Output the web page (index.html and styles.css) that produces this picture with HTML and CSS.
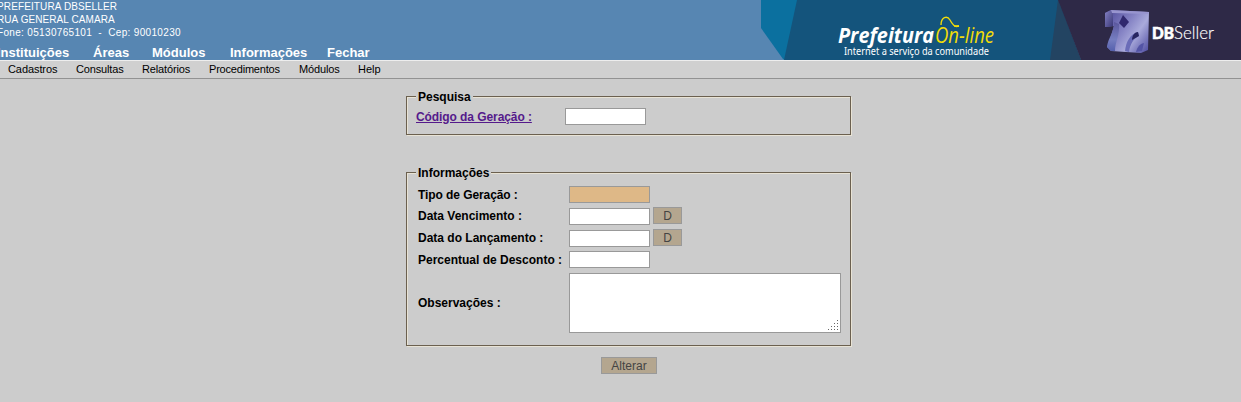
FILE: index.html
```html
<!DOCTYPE html>
<html lang="pt-BR">
<head>
<meta charset="utf-8">
<title>DBSeller</title>
<link rel="stylesheet" href="styles.css">
</head>
<body>
<header class="top">
  <div class="top-left">
    <div class="address">
      <div class="name">PREFEITURA DBSELLER</div>
      <div class="street">RUA GENERAL CAMARA</div>
      <div class="phone">Fone: 05130765101 &nbsp;-&nbsp; Cep: 90010230</div>
    </div>
    <nav class="main-nav">
      <a class="n1">Instituições</a><a class="n2">Áreas</a><a class="n3">Módulos</a><a class="n4">Informações</a><a>Fechar</a>
    </nav>
  </div>
  <svg class="banner" width="480" height="60" viewBox="0 0 480 60">
    <defs>
      <linearGradient id="cube" x1="0" y1="0.2" x2="1" y2="0.9">
        <stop offset="0" stop-color="#55519f"/><stop offset="0.4" stop-color="#8583c4"/><stop offset="0.65" stop-color="#a9aadb"/><stop offset="1" stop-color="#5553a5"/>
      </linearGradient>
      <linearGradient id="side" x1="0" y1="0" x2="1" y2="1">
        <stop offset="0" stop-color="#8582c4"/><stop offset="1" stop-color="#393777"/>
      </linearGradient>
      <linearGradient id="leg" x1="0" y1="0" x2="0" y2="1">
        <stop offset="0" stop-color="#5a569c"/><stop offset="0.6" stop-color="#757dc0"/><stop offset="1" stop-color="#5560ad"/>
      </linearGradient>
    </defs>
    <path d="M0 0H37L24 60L22 59L0 28Z" fill="#0b709f"/>
    <path d="M36 0H298L320 60H23Z" fill="#14547c"/>
    <path d="M297 0L320 60H289Z" fill="#234462"/>
    <path d="M297 0H480V60H320Z" fill="#2e2947"/>
    <g>
      <path d="M344 13L350 10L388 12L387 50L380 53L350 51L346 47L350 36L353 26L344 27Z" fill="url(#cube)"/>
      <path d="M344 13L350 10L352 14L352 26L344 27Z" fill="url(#side)"/>
      <path d="M350 10L388 12L387 14L351 13Z" fill="#9895cf"/>
      <path d="M353 22L358 24C359 35 354 42 354 51L350 51L346 47C347 38 353 33 353 22Z" fill="url(#leg)"/>
      <path d="M362 15L368 22L363 28L358 23Z" fill="#30286e"/>
      <path d="M377 32C369 34 365 42 364 51L368 52C369 44 373 38 378 36Z" fill="#6a6cb8"/>
      <path d="M377 32L378 36L371 40C371 35 374 32 377 32Z" fill="#27255f"/>
      <path d="M383 43C378 44 376 48 375 52L381 51Z" fill="#5354a5"/>
    </g>
    <text class="brand" x="77" y="43" textLength="96" lengthAdjust="spacingAndGlyphs">Prefeitura</text>
    <text class="online" x="174" y="43" textLength="59" lengthAdjust="spacingAndGlyphs">On-line</text>
    <path d="M180 25C180 17 186 15 189 20C193 27 195 27 198 26" fill="none" stroke="#f3dc08" stroke-width="1.4"/>
    <path d="M193 26H198" stroke="#f3dc08" stroke-width="1.6"/>
    <text class="tagline" x="83" y="54.500" textLength="145" lengthAdjust="spacingAndGlyphs">Internet a serviço da comunidade</text>
    <text class="db" x="391" y="39" textLength="22" lengthAdjust="spacingAndGlyphs">DB</text>
    <text class="seller" x="413" y="39" textLength="40" lengthAdjust="spacingAndGlyphs">Seller</text>
  </svg>
</header>
<nav class="menu">
  <a class="m1">Cadastros</a><a class="m2">Consultas</a><a class="m3">Relatórios</a><a class="m4">Procedimentos</a><a class="m5">Módulos</a><a>Help</a>
</nav>
<main class="content">
  <fieldset class="box search">
    <legend>Pesquisa</legend>
    <div class="search-row"><a class="link" href="#">Código da Geração :</a><input class="field" type="text"></div>
  </fieldset>
  <fieldset class="box info">
    <legend>Informações</legend>
    <div class="grid">
      <label class="type">Tipo de Geração :</label><div><input class="field tan" type="text" readonly></div>
      <label class="due">Data Vencimento :</label><div class="date"><input class="field" type="text"><button class="btn d">D</button></div>
      <label class="due">Data do Lançamento :</label><div class="date"><input class="field" type="text"><button class="btn d">D</button></div>
      <label class="discount">Percentual de Desconto :</label><div><input class="field" type="text"></div>
      <label class="notes">Observações :</label>
      <div class="area"><textarea></textarea>
        <svg class="grip" width="10" height="10" viewBox="0 0 10 10" fill="#666"><path d="M9 0h1v1h-1zM6 3h1v1h-1zM9 3h1v1h-1zM3 6h1v1h-1zM6 6h1v1h-1zM9 6h1v1h-1zM0 9h1v1h-1zM3 9h1v1h-1zM6 9h1v1h-1zM9 9h1v1h-1z"/></svg>
      </div>
    </div>
  </fieldset>
  <button class="btn submit">Alterar</button>
</main>
</body>
</html>
```

FILE: styles.css
```css
* { box-sizing: border-box; }
body {
  margin: 0;
  height: 402px;
  overflow: hidden;
  background: #ccc;
  color: #000;
  font-family: "Liberation Sans", Arial, sans-serif;
  font-size: 12px;
}
.top {
  display: flex;
  justify-content: space-between;
  height: 60px;
  background: #5786b2;
  color: #fff;
  overflow: hidden;
}
.top-left { margin-left: -3px; white-space: nowrap; }
.address { font-size: 10px; line-height: 13px; height: 45px; }
.name { letter-spacing: 0.12px; }
.street { letter-spacing: 0.08px; }
.phone { letter-spacing: 0.33px; }
.main-nav { display: flex; font-size: 13px; font-weight: bold; line-height: 15px; }
.n1 { width: 96px; }
.n2 { width: 59px; }
.n3 { width: 78px; }
.n4 { width: 97px; }
.banner { flex: none; display: block; }
.banner text { font-family: "Open Sans", sans-serif; fill: #fff; }
.banner .brand { font-size: 21px; font-weight: 700; font-style: italic; }
.banner .online { font-size: 21px; font-style: italic; fill: #f3dc08; }
.banner .tagline { font-family: "Noto Sans", sans-serif; font-size: 10px; }
.banner .db { font-family: Lato, sans-serif; font-weight: 900; font-size: 16px; stroke: #fff; stroke-width: 0.6px; }
.banner .seller { font-family: Lato, sans-serif; font-weight: 300; font-size: 17px; stroke: #fff; stroke-width: 0.15px; }
.menu {
  display: flex;
  height: 19px;
  padding-left: 8px;
  border-top: 1px solid #eee;
  border-bottom: 1px solid #929292;
  background: #d0d0d0;
  font-size: 11px;
  line-height: 17px;
}
.m1 { width: 68px; letter-spacing: -0.08px; }
.m2 { width: 66px; letter-spacing: -0.15px; }
.m3 { width: 67px; letter-spacing: -0.15px; }
.m4 { width: 90px; letter-spacing: -0.2px; }
.m5 { width: 59px; letter-spacing: -0.15px; }
.content {
  display: flex;
  flex-direction: column;
  align-items: center;
  padding: 11px 0 0 16px;
}
.box {
  width: 445px;
  margin: 0;
  padding: 0 9px;
  border: 1px solid #6b604f;
  box-shadow: 1px 1px 0 #e8e3d5, inset 1px 1px 0 #e8e3d5;
  font-weight: bold;
}
.box legend { height: 13px; padding: 0 2px; line-height: 14px; background: #ccc; }
.search { height: 45px; }
.info { height: 180px; margin-top: 31px; }
.search-row { display: flex; align-items: flex-start; padding-top: 5px; }
.link { width: 149px; color: #551a8b; line-height: 18px; letter-spacing: -0.08px; }
.field {
  display: block;
  width: 81px;
  height: 17px;
  padding: 0;
  border: 1px solid #999;
  border-radius: 0;
  background: #fff;
}
.field.tan { background: #deb887; }
.grid {
  display: grid;
  grid-template-columns: 151px 272px;
  grid-template-rows: 17px 17px 16px 17px 60px;
  row-gap: 5px;
  align-items: start;
  padding: 7px 0 0 2px;
}
.grid label { line-height: 17px; }
.grid .type { margin-top: 1px; letter-spacing: -0.08px; }
.grid .discount { margin-top: 1px; }
.grid .notes { align-self: center; }
.date { display: flex; gap: 3px; align-items: flex-start; }
.date .btn { margin-top: -1px; }
.btn {
  height: 17px;
  padding: 2px 0 0;
  border: 1px solid #999;
  border-radius: 0;
  background: #b4a68f;
  color: #444;
  font: 12px/13px "Liberation Sans", Arial, sans-serif;
}
.d { width: 29px; }
.area { position: relative; height: 60px; }
textarea {
  display: block;
  width: 272px;
  height: 60px;
  border: 1px solid #999;
  background: #fff;
  resize: none;
}
.grip { position: absolute; right: 3px; bottom: 3px; }
.submit { width: 56px; margin: 11px 0 0 1px; }
```
